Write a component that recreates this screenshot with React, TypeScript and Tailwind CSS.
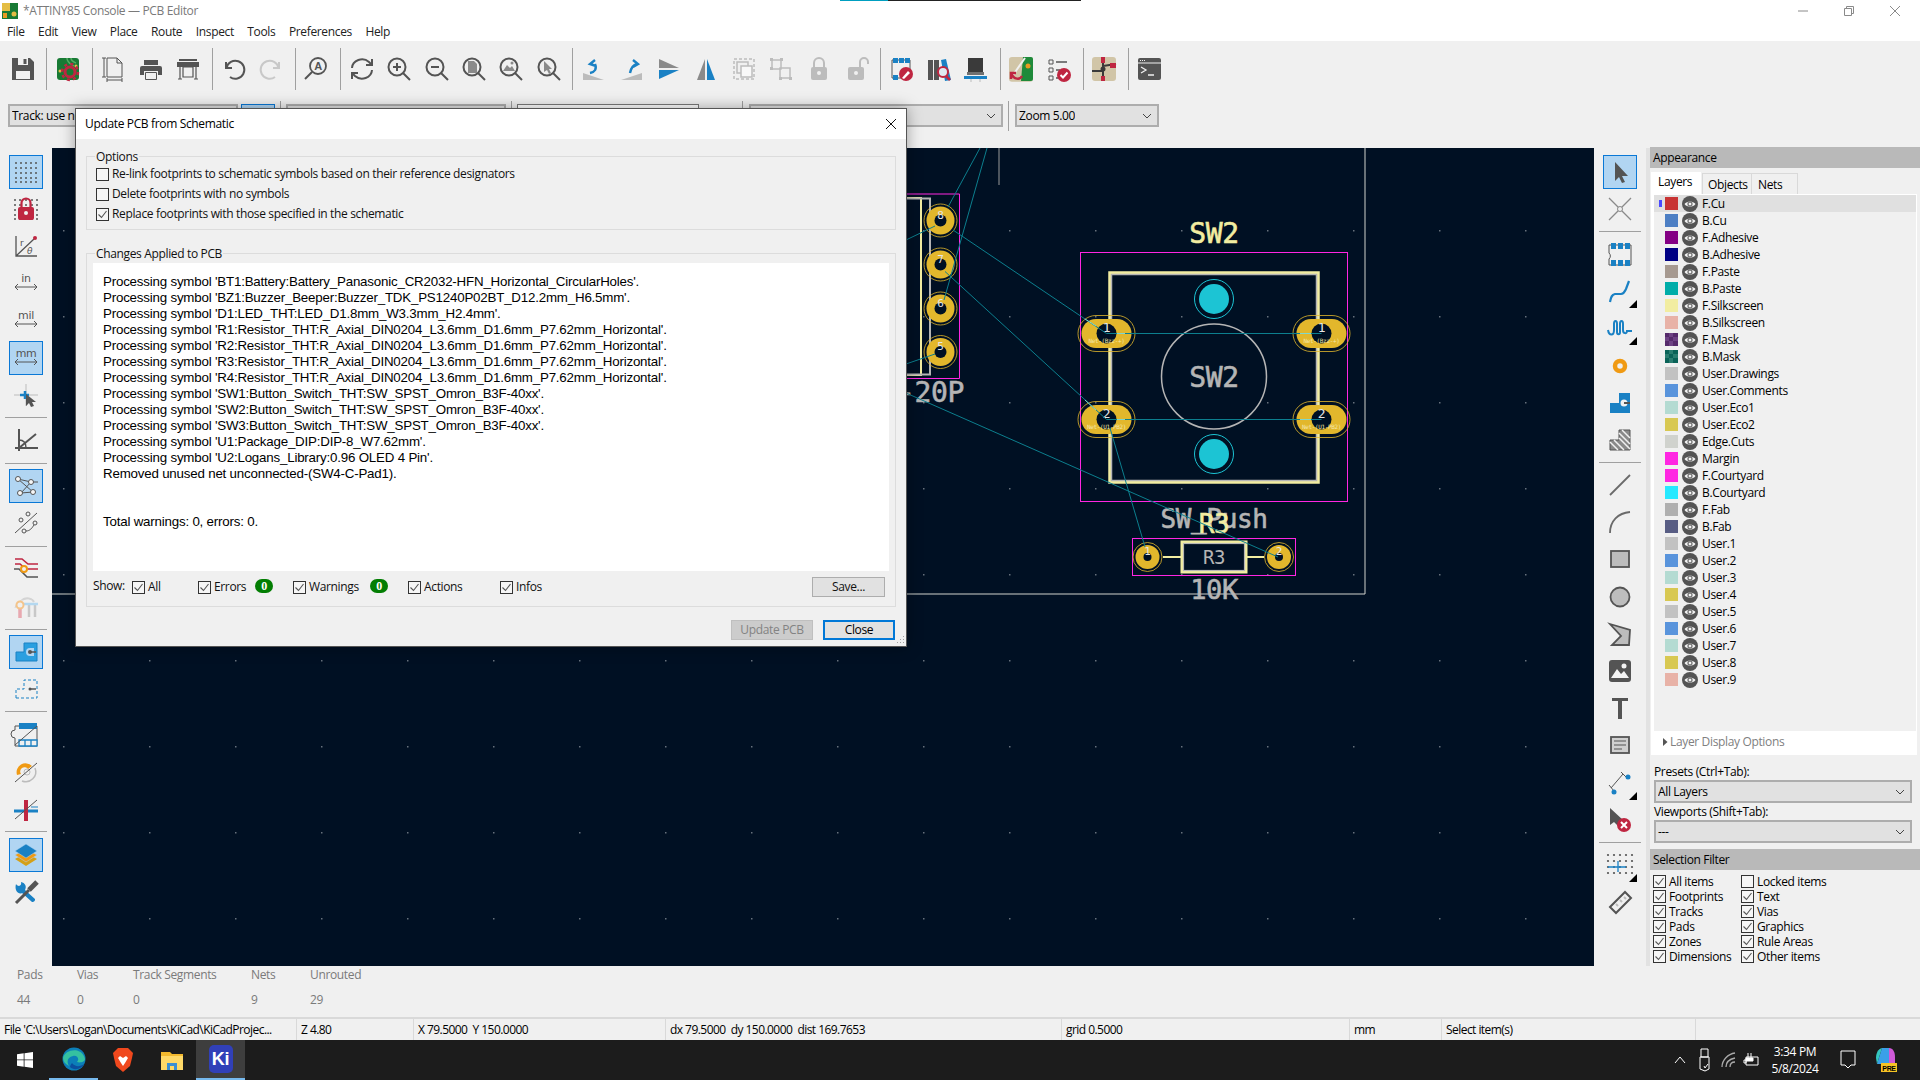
import type { ReactNode } from "react";

const G = "#545454";
const B = "#1a81c4";
const R = "#bf2641";
const D = "#bcbcbc";

function Ic({ children }: { children: ReactNode }) {
  return (
    <svg width="24" height="24" viewBox="0 0 24 24" fill="none" className="overflow-visible">
      {children}
    </svg>
  );
}

const corner = <path d="M21 29h8v-8z" fill="#000" />;
const strike = <path d="M1 22 23 3" stroke={G} strokeWidth="1" />;
const Lock = ({ open }: { open?: boolean }) => (
  <Ic>
    <rect x="4" y="10" width="16" height="13" rx="2" fill={D} />
    <path d={open ? "M16 10V5a4 4 0 0 1 8 0v2" : "M7 10V6a5 5 0 0 1 10 0v4"} stroke={D} strokeWidth="2" />
    <circle cx="12" cy="16" r="2" fill="#f0f0f0" />
  </Ic>
);

const icons: Record<string, ReactNode> = {
  save: (
    <Ic>
      <path d="M1 1h18l4 4v18H1z" fill={G} />
      <rect x="7" y="1" width="10" height="7" fill="#f0f0f0" />
      <rect x="12.500" y="2" width="3" height="5" fill={G} />
      <rect x="5" y="14" width="14" height="8" fill="#f0f0f0" />
    </Ic>
  ),
  boardGear: (
    <Ic>
      <rect x="1" y="1" width="22" height="22" rx="3" fill="#187a34" />
      <path d="M11 1c0 5 4 6 7 8M15 1c0 3 3 4 5 5" stroke="#52ad62" strokeWidth="1.500" />
      <circle cx="4" cy="14" r="1.500" fill="#e4bd44" />
      <circle cx="20" cy="9" r="1.500" fill="#e4bd44" />
      <circle cx="14" cy="15" r="5" stroke={R} strokeWidth="3" />
      <circle cx="14" cy="15" r="8" stroke={R} strokeWidth="2.500" strokeDasharray="3 3.300" />
    </Ic>
  ),
  page: (
    <Ic>
      <path d="M6 1h10l5 5v14H6zM16 1v5h5M3 1v19M1 1h4M1 20h4M6 23h15M6 21v4M21 21v4" stroke={G} strokeWidth="1" />
    </Ic>
  ),
  print: (
    <Ic>
      <path d="M5 3h14v5H5z" fill={G} />
      <path d="M3 9h18a2 2 0 0 1 2 2v7h-4v-4H5v4H1v-7a2 2 0 0 1 2-2z" fill={G} />
      <path d="M6.500 15.500h11v7h-11z" fill="#f0f0f0" stroke={G} />
    </Ic>
  ),
  plot: (
    <Ic>
      <path d="M3 2h18v2H3zM1 5h22v5H1z" fill={G} />
      <path d="M7 10h10v10H7zM4 10v12M20 10v12M2 22h4M18 22h4" stroke={G} strokeWidth="1.200" />
    </Ic>
  ),
  undo: (
    <Ic>
      <path d="M4 5v6h6M4.500 11A9 9 0 1 1 8 20" stroke={G} strokeWidth="2" />
    </Ic>
  ),
  redo: (
    <Ic>
      <path d="M20 5v6h-6M19.500 11A9 9 0 1 0 16 20" stroke="#c8c8c8" strokeWidth="2" />
    </Ic>
  ),
  find: (
    <Ic>
      <circle cx="14" cy="9" r="8" stroke={G} strokeWidth="1.800" />
      <path d="M8 15 1 22" stroke={G} strokeWidth="2" />
      <text x="14" y="13" textAnchor="middle" fontSize="11" fontWeight="700" fill={G} fontFamily="Liberation Sans, sans-serif">A</text>
    </Ic>
  ),
  refresh: (
    <Ic>
      <path d="M2 11a10 9 0 0 1 17-6l3 3M22 2v6h-6M22 13a10 9 0 0 1-17 6l-3-3M2 22v-6h6" stroke={G} strokeWidth="2" />
    </Ic>
  ),
  zoomIn: (
    <Ic>
      <circle cx="10" cy="10" r="8.500" stroke={G} strokeWidth="2" />
      <path d="m16 16 7 7M10 6v8M6 10h8" stroke={G} strokeWidth="2" />
    </Ic>
  ),
  zoomOut: (
    <Ic>
      <circle cx="10" cy="10" r="8.500" stroke={G} strokeWidth="2" />
      <path d="m16 16 7 7M6 10h8" stroke={G} strokeWidth="2" />
    </Ic>
  ),
  zoomFit: (
    <Ic>
      <circle cx="10" cy="10" r="8.500" stroke={G} strokeWidth="2" />
      <path d="m16 16 7 7" stroke={G} strokeWidth="2" />
      <path d="M6 4h6l3 3v9H6z" fill="#8a8a8a" />
    </Ic>
  ),
  zoomObj: (
    <Ic>
      <circle cx="10" cy="10" r="8.500" stroke={G} strokeWidth="2" />
      <path d="m16 16 7 7" stroke={G} strokeWidth="2" />
      <path d="M4 14 8 8l3 3 2-2 3 5z" fill="#8a8a8a" />
      <circle cx="13" cy="6" r="1.500" fill="#8a8a8a" />
    </Ic>
  ),
  zoomSel: (
    <Ic>
      <circle cx="10" cy="10" r="8.500" stroke={G} strokeWidth="2" />
      <path d="m16 16 7 7" stroke={G} strokeWidth="2" />
      <path d="M7 4v11l3-2 2 4 2-1-2-4h3z" fill="#8a8a8a" />
    </Ic>
  ),
  rotCcw: (
    <Ic>
      <path d="M1 23V16l21 7z" fill={D} />
      <path d="M8 16c5-1 7-4 5-9M13 3 8 7l6 2" stroke={B} strokeWidth="2.400" />
    </Ic>
  ),
  rotCw: (
    <Ic>
      <path d="M1 23h21v-7z" fill={D} />
      <path d="M10 16c1-5 3-8 7-9M13 3l5 4-5 3" stroke={B} strokeWidth="2.400" />
    </Ic>
  ),
  flip: (
    <Ic>
      <path d="M2 2 22 11H2z" fill="#8a8a8a" />
      <path d="M2 13h20L2 22z" fill={B} />
    </Ic>
  ),
  mirror: (
    <Ic>
      <path d="M11 2 3 23h8z" fill="#8a8a8a" />
      <path d="M13 2v21h8z" fill={B} />
    </Ic>
  ),
  group: (
    <Ic>
      <path d="M2 2h20v20H2z" stroke={D} strokeWidth="1.500" strokeDasharray="3 2" />
      <path d="M5 5h11v11H5z" stroke={D} strokeWidth="1.500" />
      <path d="M9 9h11v11H9z" fill="#f8f8f8" stroke={D} strokeWidth="1.500" />
    </Ic>
  ),
  ungroup: (
    <Ic>
      <path d="M3 3h9v9H3zM11 11h10v10H11z" stroke={D} strokeWidth="1.500" />
      <path d="M1 1h3v3H1zM11 1h3v3h-3zM1 10h3v3H1zM20 20h3v3h-3zM10 20h3v3h-3z" fill={D} />
    </Ic>
  ),
  lock: <Lock />,
  unlock: <Lock open />,
  fpEdit: (
    <Ic>
      <path d="M3 3h18v18H3z" stroke={G} strokeWidth="1" />
      <path d="M4 1h5v5H4zM10 1h5v5h-5zM16 1h5v5h-5zM4 18h5v5H4z" fill={B} />
      <circle cx="17" cy="17" r="7" fill={R} />
      <path d="m13 21 6-7 2 2-6 6z" fill="#fff" />
    </Ic>
  ),
  libBrowse: (
    <Ic>
      <rect x="1" y="3" width="5" height="20" fill={G} />
      <rect x="7" y="3" width="5" height="20" fill={G} />
      <path d="m14 3 5-1 5 21-6 1z" fill={B} />
      <circle cx="16" cy="15" r="5" fill="#dfe9f2" stroke={R} strokeWidth="2" />
      <path d="m19 19 4 4" stroke={R} strokeWidth="2.500" />
    </Ic>
  ),
  chip: (
    <Ic>
      <path d="M4 1h15v14H4z" fill="#3a3a3a" />
      <path d="M3 15h17v3H3z" fill="#707070" />
      <rect x="0" y="19" width="23" height="3" fill={B} />
      <path d="M7 22v3M16 22v3" stroke={D} />
    </Ic>
  ),
  drcUpdate: (
    <Ic>
      <rect x="0" y="0" width="24" height="29" rx="3" fill="#d1c5a7" transform="scale(1 .85)" />
      <path d="M14 0h8a2 2 0 0 1 2 2v20a2 2 0 0 1-2 2h-10z" fill="#1f8a3a" />
      <path d="m4 18 12-17" stroke="#f0f0f0" strokeWidth="2" />
      <circle cx="19" cy="9" r="2.500" fill="#e89a20" />
      <path d="M2 16c3 7 9 7 11 3M2 22v-6h5" stroke={R} strokeWidth="2.500" />
    </Ic>
  ),
  checklist: (
    <Ic>
      <path d="M2 3h4v4H2zM2 11h4v4H2zM2 19h4v4H2z" stroke={G} />
      <path d="M9 5h11M9 13h4M9 21h2" stroke={G} strokeWidth="1.500" />
      <circle cx="17" cy="18" r="7" fill={R} />
      <path d="m13.500 18 2.500 2.500 4.500-5" stroke="#fff" strokeWidth="2" />
    </Ic>
  ),
  schematic: (
    <Ic>
      <rect x="0" y="0" width="24" height="24" rx="3" fill="#d1c5a7" />
      <path d="M11 0v24M0 14h11M11 9l13-2" stroke="#3a3a3a" strokeWidth="2" />
      <rect x="9" y="0" width="4" height="6" fill={R} />
      <rect x="18" y="6" width="6" height="5" fill={R} />
      <rect x="9" y="19" width="4" height="5" fill={R} />
      <circle cx="11" cy="12" r="2.500" fill="#3a3a3a" />
    </Ic>
  ),
  console: (
    <Ic>
      <rect x="0" y="1" width="23" height="22" rx="2" fill={G} />
      <path d="M0 6h23" stroke="#f0f0f0" />
      <path d="m3 10 5 3-5 3M10 18h6" stroke="#f0f0f0" strokeWidth="1.300" />
      <path d="M2 3.500h6" stroke="#f0f0f0" strokeDasharray="1 1" />
    </Ic>
  ),

  grid: (
    <Ic>
      {[3, 8, 13, 18, 22].flatMap((y) =>
        [2, 7, 12, 17, 22].map((x) => <circle key={x + "-" + y} cx={x} cy={y} r="1" fill={G} />),
      )}
    </Ic>
  ),
  gridLock: (
    <Ic>
      {[3, 8, 13, 18, 22].flatMap((y) =>
        [1, 6, 12, 18, 23].map((x) => <circle key={x + "-" + y} cx={x} cy={y} r="1" fill={G} />),
      )}
      <rect x="4" y="10" width="16" height="13" rx="2" fill={R} />
      <path d="M7.500 10V6a4.500 4.500 0 0 1 9 0v4" stroke={R} strokeWidth="2.200" />
      <circle cx="12" cy="16" r="2" fill="#f0f0f0" />
    </Ic>
  ),
  polar: (
    <Ic>
      <path d="M2 2v20h21M2 22 20 5" stroke={G} strokeWidth="1.300" />
      <circle cx="21" cy="4" r="2" fill={R} />
      <text x="6" y="12" fontSize="9" fill={G} fontFamily="DejaVu Sans, sans-serif">r</text>
      <text x="13" y="20" fontSize="9" fill={G} fontStyle="italic" fontFamily="DejaVu Sans, sans-serif">θ</text>
    </Ic>
  ),
  in: <Unit t="in" />,
  mil: <Unit t="mil" />,
  mm: <Unit t="mm" />,
  cursor: (
    <Ic>
      <path d="M0 12h24M12 1v22" stroke={D} />
      <path d="M6 12h9M11 8v8" stroke={B} strokeWidth="2.500" />
      <path d="M12 11v12l3-3 2 4 3-1-2-4h4z" fill={G} />
    </Ic>
  ),
  angle: (
    <Ic>
      <path d="M5 1v22M1 20h23M5 20 22 6" stroke={G} strokeWidth="2" />
      <path d="M5 12c5 0 7 3 7 8" stroke={G} strokeWidth="1.500" />
    </Ic>
  ),
  rat: (
    <Ic>
      <path d="M4 5 17 8 7 19 19 18M4 5l15 13M17 8h7" stroke={G} />
      <circle cx="4" cy="5" r="2.500" fill="#f8f8f8" stroke={G} />
      <circle cx="17" cy="8" r="2.500" fill="#f8f8f8" stroke={G} />
      <circle cx="6" cy="19" r="2.500" fill="#f8f8f8" stroke={G} />
      <circle cx="19" cy="18" r="2.500" fill="#f8f8f8" stroke={G} />
    </Ic>
  ),
  ratCurve: (
    <Ic>
      <path d="M1 22 23 2" stroke={G} />
      <circle cx="7" cy="9" r="2" stroke={G} />
      <circle cx="14" cy="3" r="2" stroke={G} />
      <circle cx="10" cy="20" r="2" stroke={G} />
      <circle cx="21" cy="12" r="2" stroke={G} />
      <path d="M12 20c4 0 6-3 8-6" stroke={G} />
    </Ic>
  ),
  netHl: (
    <Ic>
      <path d="M1 2h7l6 5h10M1 7h5l6 5h12" stroke={R} strokeWidth="1.600" />
      <path d="M0 12h5l8 8h11" stroke={G} strokeWidth="1.600" />
      <circle cx="10" cy="12" r="3" fill="#f0f0f0" stroke="#f09a13" strokeWidth="2" />
    </Ic>
  ),
  clearance: (
    <Ic>
      <path d="M8 6V6c4-3 10-2 12 2" stroke="#d4d4d4" strokeWidth="2" />
      <path d="M1 14c2-9 14-12 19-7" stroke="#d4d4d4" strokeWidth="1" />
      <path d="M6 14v10" stroke="#e8a9b0" strokeWidth="3.500" />
      <path d="M15 9v14M21 9v14" stroke="#c8c8c8" strokeWidth="2.500" />
      <path d="M9 10h15" stroke="#b4d8f0" strokeWidth="2.500" />
      <circle cx="6" cy="11" r="3.500" fill="#f0f0f0" stroke="#f4c48a" strokeWidth="2" />
    </Ic>
  ),
  padFill: (
    <Ic>
      <path d="M2 21V12h8V3h13v18z" fill="#2b9fe0" stroke={B} />
      <path d="M20 8h-4a4 4 0 0 0 0 8h4" stroke={G} strokeWidth="0" fill="#b1d5f2" />
      <circle cx="16" cy="12" r="2" fill={G} />
      <path d="M16 12h6" stroke={G} strokeWidth="1.500" />
    </Ic>
  ),
  padLine: (
    <Ic>
      <path d="M2 21V12h8V3h13v18z" stroke={B} strokeDasharray="3 2" />
      <circle cx="16" cy="12" r="1.500" fill={G} />
      <path d="M16 12h6" stroke={G} strokeWidth="1.500" />
    </Ic>
  ),
  fpStrike: (
    <Ic>
      <path d="M1 7a2 2 0 0 0 0 8v8h22V3H1z" stroke={G} />
      <path d="M5 0h6v6H5zM11 0h6v6h-6zM17 0h6v6h-6z" fill={B} />
      <path d="M5 17h6v6H5zM11 17h6v6h-6zM17 17h6v6h-6z" fill="#f0f0f0" stroke={B} strokeWidth="1.300" />
      {strike}
    </Ic>
  ),
  viaStrike: (
    <Ic>
      <path d="M3 15a9 9 0 0 1 15-9l-4 3a4 4 0 0 0-7 5z" fill="#f09a13" />
      <path d="M8 21a10 10 0 0 0 13-13" stroke={D} strokeWidth="1.500" />
      <circle cx="13" cy="12" r="3" stroke={D} />
      {strike}
    </Ic>
  ),
  trackStrike: (
    <Ic>
      <path d="M0 14h24" stroke={B} strokeWidth="3" />
      <path d="M12 3v21" stroke={R} strokeWidth="4" />
      <path d="M17 10h7" stroke={B} />
      {strike}
    </Ic>
  ),
  layers: (
    <Ic>
      <path d="m12 10 11 6-11 7-11-7z" fill="#d4a017" />
      <path d="m12 6 11 6-11 7-11-7z" fill="#f09a13" stroke="#b1d5f2" strokeWidth=".5" />
      <path d="m12 1 11 7-11 7-11-7z" fill={B} stroke="#b1d5f2" strokeWidth=".5" />
    </Ic>
  ),
  tools: (
    <Ic>
      <path d="M2 4c3 4 6 1 5-2 4 1 6 4 4 8l10 9a2.500 2.500 0 0 1-3 3L8 13c-3 2-8-2-6-9z" fill={B} />
      <path d="m2 23 13-13" stroke={G} strokeWidth="3" />
      <path d="m15 10 8-8" stroke={G} strokeWidth="5" />
    </Ic>
  ),

  select: (
    <Ic>
      <path d="M7 2v19l4-4 3 6 3-1-3-6h6z" fill={G} />
    </Ic>
  ),
  noconn: (
    <Ic>
      <path d="M1 1 23 23M23 1 1 23" stroke="#8a8a8a" strokeWidth="1.300" />
      <circle cx="12" cy="12" r="2.500" fill="#f0f0f0" stroke="#8a8a8a" />
    </Ic>
  ),
  footprint: (
    <Ic>
      <path d="M1 3h22v20H1v-6a4 4 0 0 0 0-6z" stroke={G} />
      <path d="M3 1h5v6H3zM10 1h5v6h-5zM17 1h5v6h-5zM3 18h5v6H3zM10 18h5v6h-5zM17 18h5v6h-5z" fill={B} />
    </Ic>
  ),
  track: (
    <Ic>
      <path d="M2 23c1-4 1-7 5-8h6c3 0 4-3 5-5l3-8" stroke={B} strokeWidth="2.200" />
      {corner}
    </Ic>
  ),
  tune: (
    <Ic>
      <path d="M0 14c1 6 6 6 6 0V8c0-4 3-4 3 0v8c0 3 3 3 3 0V8c0-4 3-4 3 0v6c0 4 4 4 4 1h5" stroke={B} strokeWidth="2" />
      {corner}
    </Ic>
  ),
  via: (
    <Ic>
      <circle cx="12" cy="12" r="5" stroke="#f09a13" strokeWidth="4.500" />
    </Ic>
  ),
  pad: (
    <Ic>
      <path d="M2 22V12h9V2h11v20z" fill={B} />
      <circle cx="16" cy="12" r="3.500" fill="#f0f0f0" />
      <path d="M16 12h6" stroke={G} strokeWidth="2" />
    </Ic>
  ),
  zone: (
    <Ic>
      <path d="M2 22V12h9V2h11v20z" fill="#8a8a8a" stroke={G} />
      <path d="M11 5l11 11M11 10l11 11M6 12l10 10M2 14l8 8M14 2l8 8" stroke="#f0f0f0" strokeWidth="1.500" />
    </Ic>
  ),
  line: (
    <Ic>
      <path d="M2 22 22 2" stroke="#6a6a6a" strokeWidth="1.800" />
    </Ic>
  ),
  arc: (
    <Ic>
      <path d="M2 23C2 11 10 3 22 2" stroke="#6a6a6a" strokeWidth="1.800" />
    </Ic>
  ),
  rect: (
    <Ic>
      <rect x="3" y="4" width="18" height="16" fill="#bdbdbd" stroke={G} strokeWidth="1.800" />
    </Ic>
  ),
  circle: (
    <Ic>
      <circle cx="12" cy="12" r="9.500" fill="#bdbdbd" stroke={G} strokeWidth="1.800" />
    </Ic>
  ),
  poly: (
    <Ic>
      <path d="M2 2 22 8l-1 15-17 0 9-9z" fill="#bdbdbd" stroke={G} strokeWidth="1.800" />
    </Ic>
  ),
  image: (
    <Ic>
      <rect x="1" y="1" width="22" height="22" rx="3" fill={G} />
      <path d="M3 19 9 10l4 5 3-3 5 7z" fill="#f4f4f4" />
      <circle cx="16" cy="7" r="2.500" fill="#f4f4f4" />
    </Ic>
  ),
  text: (
    <Ic>
      <path d="M4 2h16v3H4zM10 5h4v18h-4z" fill={G} />
    </Ic>
  ),
  textbox: (
    <Ic>
      <rect x="3" y="4" width="18" height="16" fill="#d0d0d0" stroke={G} strokeWidth="1.800" />
      <path d="M6 8h12M6 12h12M6 16h8" stroke={G} />
    </Ic>
  ),
  dim: (
    <Ic>
      <path d="M3 17 15 3M1 14l5 6M13 1l5 5" stroke={G} />
      <circle cx="20" cy="6" r="2.500" fill={B} />
      <circle cx="6" cy="21" r="2.500" fill={B} />
      {corner}
    </Ic>
  ),
  del: (
    <Ic>
      <path d="M2 0v17l4-3 4 4 5-6z" fill={G} />
      <circle cx="16" cy="17" r="7" fill={R} />
      <path d="m13 14 6 6M19 14l-6 6" stroke="#fff" strokeWidth="2" />
    </Ic>
  ),
  gridOrigin: (
    <Ic>
      {[2, 8, 14, 20].flatMap((y) =>
        [2, 8, 14, 20, 26].map((x) => <circle key={x + "-" + y} cx={x - 2} cy={y} r="1.100" fill={G} />),
      )}
      <path d="M0 14h18M10 8v11" stroke={B} strokeWidth="1.300" />
      {corner}
    </Ic>
  ),
  ruler: (
    <Ic>
      <path d="m2 17 15-15 6 6-15 15z" stroke={G} strokeWidth="2" />
      <path d="m8 14 2 2M12 10l2 2M16 7l2 2" stroke="#bdbdbd" strokeWidth="2" />
    </Ic>
  ),
};

function Unit({ t }: { t: string }) {
  return (
    <Ic>
      <text x="12" y="11" textAnchor="middle" fontSize="11" fill={G} fontFamily="DejaVu Sans, sans-serif">{t}</text>
      <path d="M1 16h22M4 13l-3 3 3 3M20 13l3 3-3 3" stroke={G} strokeWidth="1" />
    </Ic>
  );
}

const topTools = ["save", "|", "boardGear", "|", "page", "print", "plot", "|", "undo", "redo", "|", "find", "|", "refresh", "zoomIn", "zoomOut", "zoomFit", "zoomObj", "zoomSel", "|", "rotCcw", "rotCw", "flip", "mirror", "group", "ungroup", "lock", "unlock", "|", "fpEdit", "libBrowse", "chip", "|", "drcUpdate", "checklist", "|", "schematic", "|", "console"];
const leftTools = ["*grid", "gridLock", "polar", "in", "mil", "*mm", "cursor", "|", "angle", "|", "*rat", "ratCurve", "|", "netHl", "clearance", "|", "*padFill", "padLine", "|", "fpStrike", "viaStrike", "trackStrike", "|", "*layers", "tools"];
const rightTools = ["*select", "noconn", "|", "footprint", "track", "tune", "via", "pad", "zone", "|", "line", "arc", "rect", "circle", "poly", "image", "text", "textbox", "dim", "del", "|", "gridOrigin", "ruler"];

function SideBar({ items, className, sep }: { items: string[]; className: string; sep: string }) {
  return (
    <div className={"flex flex-col items-center pt-[5px] bg-[#f0f0f0] " + className}>
      {items.map((n, i) =>
        n === "|" ? (
          <div key={i} className={"w-full flex items-center px-[5px] shrink-0 " + sep}>
            <div className="h-px w-full bg-[#a0a0a0]" />
          </div>
        ) : (
          <div key={i} className="h-[37.2px] w-[37px] shrink-0 flex items-center justify-center">
            <div className={"w-[34px] h-[34px] flex items-center justify-center border " + (n[0] === "*" ? "bg-[#b1d5f2] border-[#0a78d6]" : "border-transparent")}>
              {icons[n.replace("*", "")]}
            </div>
          </div>
        ),
      )}
    </div>
  );
}

function Check({ on = true }: { on?: boolean }) {
  return (
    <span className="w-[13px] h-[13px] shrink-0 border border-[#333] bg-[#f6f6f6] flex items-center justify-center">
      {on && (
        <svg width="11" height="11" viewBox="0 0 11 11" fill="none">
          <path d="m1.500 5.500 3 3 5-6.500" stroke="#555" strokeWidth="1.100" />
        </svg>
      )}
    </span>
  );
}

function Chevron() {
  return (
    <svg width="10" height="6" viewBox="0 0 10 6" fill="none" className="ml-auto shrink-0">
      <path d="m1 1 4 4 4-4" stroke="#444" strokeWidth="1" />
    </svg>
  );
}

function Combo({ text, className }: { text?: string; className: string }) {
  return (
    <div className={"h-[23px] border-2 border-[#adadad] bg-[#e1e1e1] flex items-center pl-[2px] pr-[5px] shrink-0 " + className}>
      <span className="truncate text-black">{text}</span>
      <Chevron />
    </div>
  );
}

function Pad({ x, y, num, net }: { x: number; y: number; num: string; net: string }) {
  return (
    <g>
      <rect x={x - 28.500} y={y - 18} width="57" height="36" rx="18" fill="none" stroke="#e2b72c" strokeWidth=".8" />
      <rect x={x - 25} y={y - 14.500} width="50" height="29" rx="14.500" fill="#e2b72c" />
      <circle cx={x} cy={y} r="10" fill="#001023" />
      <text x={x} y={y - 2} textAnchor="middle" fontSize="13" fill="#e6e6e6" fontFamily="DejaVu Sans Mono, monospace">{num}</text>
      <text x={x} y={y + 9} textAnchor="middle" fontSize="6" fill="#f3e6a6" fontFamily="DejaVu Sans Mono, monospace">{net}</text>
    </g>
  );
}

function RoundPad({ x, y, num, r = 16.500 }: { x: number; y: number; num: string; r?: number }) {
  return (
    <g>
      <circle cx={x} cy={y} r={r} fill="none" stroke="#e2b72c" strokeWidth=".8" />
      <circle cx={x} cy={y} r={r - 2.500} fill="#e2b72c" />
      <circle cx={x} cy={y} r={r - 10.500} fill="#001023" />
      <text x={x} y={y - 2} textAnchor="middle" fontSize="11" fill="#e6e6e6" fontFamily="DejaVu Sans Mono, monospace">{num}</text>
    </g>
  );
}

function Label({ x, y, size, fill, t, anchor = "middle" }: { x: number; y: number; size: number; fill: string; t: string; anchor?: "middle" | "end" }) {
  return (
    <text x={x} y={y} textAnchor={anchor} fontSize={size} fill={fill} stroke={fill} strokeWidth=".6" fontFamily="DejaVu Sans Mono, monospace">
      {t}
    </text>
  );
}

function Board() {
  const dots = [];
  for (let x = 63; x < 1594; x += 86) {
    for (let y = 230 - 86; y < 966; y += 86) {
      if (y > 148) dots.push(<rect key={x + "-" + y} x={x} y={y} width="1.500" height="1.500" fill="#66707c" />);
    }
  }
  const teal = "#0c7f8e";
  return (
    <svg viewBox="52 148 1542 818" width="1542" height="818" className="block">
      <rect x="52" y="148" width="1542" height="818" fill="#001023" />
      {dots}
      <path d="M1365 148V594H52" fill="none" stroke="#d0d2cd" strokeWidth="1" />
      <path d="M999 148v37" stroke="#9a9a9a" strokeWidth="1" />

      <rect x="1080.500" y="252.500" width="267" height="249" fill="none" stroke="#ff26e2" />
      <rect x="1110" y="273" width="208" height="209" fill="none" stroke="#f2eda1" strokeWidth="3.500" />
      <rect x="1111.500" y="274.500" width="205" height="206" fill="none" stroke="#b5b5b5" strokeWidth="1.500" />
      <circle cx="1214" cy="376.500" r="52.500" fill="#001023" stroke="#b5b5b5" strokeWidth="1.500" />
      <Label x={1214} y={387} size={28} fill="#b5b5b5" t="SW2" />
      <Label x={1214} y={243} size={28} fill="#f2eda1" t="SW2" />

      {[299, 454].map((y) => (
        <g key={y}>
          <circle cx="1214" cy={y} r="19.500" fill="#001023" stroke="#1cc4d4" />
          <circle cx="1214" cy={y} r="15" fill="#1cc4d4" />
        </g>
      ))}
      <Pad x={1106.500} y={333.500} num="1" net="Net-(Bzz-+)" />
      <Pad x={1321.500} y={333.500} num="1" net="Net-(Bzz-+)" />
      <Pad x={1106.500} y={419.500} num="2" net="Net-(U1-PB2)" />
      <Pad x={1321.500} y={419.500} num="2" net="Net-(U1-PB2)" />

      <path d="M906 194H959.500V378.500H906" fill="none" stroke="#ff26e2" />
      <path d="M906 198h15v177h-15" fill="none" stroke="#f2eda1" strokeWidth="2" />
      <path d="M906 198.500h24v176h-24" fill="none" stroke="#b5b5b5" strokeWidth="2" />
      <RoundPad x={940.500} y={220.500} num="8" />
      <RoundPad x={940.500} y={264.500} num="7" />
      <RoundPad x={940.500} y={308.500} num="6" />
      <RoundPad x={940.500} y={352} num="5" />
      <Label x={964} y={402} size={28} fill="#b5b5b5" t="-20P" anchor="end" />

      <Label x={1214} y={528} size={26} fill="#b5b5b5" t="SW_Push" />
      <Label x={1214} y={533} size={26} fill="#f2eda1" t="R3" />
      <rect x="1132.500" y="538.500" width="163" height="37" fill="none" stroke="#ff26e2" />
      <path d="M1163 557h19M1246 557h18" stroke="#f2eda1" strokeWidth="2" />
      <rect x="1182" y="542" width="64" height="30" fill="none" stroke="#f2eda1" strokeWidth="3" />
      <rect x="1183.500" y="543.500" width="61" height="27" fill="none" stroke="#b5b5b5" strokeWidth="1.200" />
      <text x="1214" y="564" textAnchor="middle" fontSize="19" fill="#b5b5b5" fontFamily="DejaVu Sans Mono, monospace">R3</text>
      <RoundPad x={1147.500} y={557} num="1" r={14.500} />
      <RoundPad x={1279} y={557} num="2" r={14.500} />
      <Label x={1214} y={599} size={27} fill="#b5b5b5" t="10K" />

      <g stroke={teal} strokeWidth="1" fill="none">
        <path d="M1106.500 333.500H1321.500M1106.500 419.500H1321.500" />
        <path d="M953 230 1106.500 333.500M945 271.500 1106.500 419.500" />
        <path d="M980 148 948 207M987 148 944 300M1110 428 1145 547M906 393 1278 557" />
        <path d="M906 240 935 226M906 364 935 354" />
      </g>
      <g stroke="#7fd8cc" strokeWidth="1" fill="none">
        <path d="M1085 319 1096 326M1085 400 1096 410M1117 333.500H1125M1117 419.500H1125M1300 333.500H1311M1300 419.500H1311" />
      </g>
    </svg>
  );
}

const layers: [string, string][] = [
  ["F.Cu", "#c83434"], ["B.Cu", "#4d7fc4"], ["F.Adhesive", "#840084"], ["B.Adhesive", "#000084"],
  ["F.Paste", "#a69990"], ["B.Paste", "#00ada9"], ["F.Silkscreen", "#f2eda1"], ["B.Silkscreen", "#e8b2a7"],
  ["F.Mask", "mask-f"], ["B.Mask", "mask-b"], ["User.Drawings", "#c2c2c2"], ["User.Comments", "#5994dc"],
  ["User.Eco1", "#b4dbd2"], ["User.Eco2", "#d8c852"], ["Edge.Cuts", "#d0d2cd"], ["Margin", "#ff26e2"],
  ["F.Courtyard", "#ff26e2"], ["B.Courtyard", "#26e9ff"], ["F.Fab", "#afafaf"], ["B.Fab", "#585d84"],
  ["User.1", "#c2c2c2"], ["User.2", "#5994dc"], ["User.3", "#b4dbd2"], ["User.4", "#d8c852"],
  ["User.5", "#c2c2c2"], ["User.6", "#5994dc"], ["User.7", "#b4dbd2"], ["User.8", "#d8c852"], ["User.9", "#e8b2a7"],
];

function Swatch({ color }: { color: string }) {
  if (color.startsWith("mask")) {
    const [a, b] = color === "mask-f" ? ["#552a6b", "#6d4284"] : ["#0a6358", "#2a7d70"];
    return (
      <svg width="13" height="13" viewBox="0 0 13 13" className="shrink-0">
        <rect width="13" height="13" fill={a} />
        <path d="M4 0h4v4H4zM0 4h4v4H0zM8 4h5v4H8zM4 8h4v5H4z" fill={b} />
      </svg>
    );
  }
  return <span className="w-[13px] h-[13px] shrink-0" style={{ backgroundColor: color }} />;
}

function Eye() {
  return (
    <svg width="16" height="16" viewBox="0 0 16 16" className="shrink-0" fill="none">
      <circle cx="8" cy="8" r="8" fill="#545454" />
      <path d="M2.500 8C5 4.500 11 4.500 13.500 8 11 11.500 5 11.500 2.500 8z" fill="#f4f4f4" />
      <circle cx="8" cy="8" r="2" fill="none" stroke="#777" strokeWidth="1.300" />
    </svg>
  );
}

const logLines = [
  "Processing symbol 'BT1:Battery:Battery_Panasonic_CR2032-HFN_Horizontal_CircularHoles'.",
  "Processing symbol 'BZ1:Buzzer_Beeper:Buzzer_TDK_PS1240P02BT_D12.2mm_H6.5mm'.",
  "Processing symbol 'D1:LED_THT:LED_D1.8mm_W3.3mm_H2.4mm'.",
  "Processing symbol 'R1:Resistor_THT:R_Axial_DIN0204_L3.6mm_D1.6mm_P7.62mm_Horizontal'.",
  "Processing symbol 'R2:Resistor_THT:R_Axial_DIN0204_L3.6mm_D1.6mm_P7.62mm_Horizontal'.",
  "Processing symbol 'R3:Resistor_THT:R_Axial_DIN0204_L3.6mm_D1.6mm_P7.62mm_Horizontal'.",
  "Processing symbol 'R4:Resistor_THT:R_Axial_DIN0204_L3.6mm_D1.6mm_P7.62mm_Horizontal'.",
  "Processing symbol 'SW1:Button_Switch_THT:SW_SPST_Omron_B3F-40xx'.",
  "Processing symbol 'SW2:Button_Switch_THT:SW_SPST_Omron_B3F-40xx'.",
  "Processing symbol 'SW3:Button_Switch_THT:SW_SPST_Omron_B3F-40xx'.",
  "Processing symbol 'U1:Package_DIP:DIP-8_W7.62mm'.",
  "Processing symbol 'U2:Logans_Library:0.96 OLED 4 Pin'.",
  "Removed unused net unconnected-(SW4-C-Pad1).",
];

function Badge() {
  return (
    <span className="block w-[18px] h-[14px] -mt-[2px] rounded-full bg-[#037e03] text-white text-[12px] leading-[14px] text-center font-['Liberation_Serif',serif] font-bold">0</span>
  );
}

function Dialog() {
  return (
    <div className="absolute left-[75px] top-[108px] w-[832px] h-[539px] flex flex-col border border-[#555] bg-[#f0f0f0] shadow-[0_0_14px_rgba(0,0,0,0.35)]">
      <div className="h-[30px] bg-white flex items-center pl-[9px] pr-[9px] shrink-0">
        <span className="text-black">Update PCB from Schematic</span>
        <svg width="12" height="12" viewBox="0 0 12 12" className="ml-auto" fill="none">
          <path d="m1 1 10 10M11 1 1 11" stroke="#111" strokeWidth="1" />
        </svg>
      </div>
      <div className="flex-1 flex flex-col px-[10px] pt-[17px] relative">
        <div className="h-[74px] border border-[#dcdcdc] relative pl-[9px] pt-[7px] flex flex-col shrink-0">
          <span className="absolute left-[8px] -top-[8px] leading-[16px] bg-[#f0f0f0] px-px text-[#111]">Options</span>
          {[
            ["Re-link footprints to schematic symbols based on their reference designators", false],
            ["Delete footprints with no symbols", false],
            ["Replace footprints with those specified in the schematic", true],
          ].map(([t, on]) => (
            <label key={t as string} className="h-[20px] flex items-center gap-[3px] text-[#111]">
              <Check on={on as boolean} />
              <span>{t}</span>
            </label>
          ))}
        </div>
        <div className="mt-[23px] h-[354px] border border-[#dcdcdc] relative px-[6px] pt-[9px] flex flex-col shrink-0">
          <span className="absolute left-[8px] -top-[8px] leading-[16px] bg-[#f0f0f0] px-px text-[#111]">Changes Applied to PCB</span>
          <div className="h-[308px] bg-white pl-[10px] pt-[11px] text-[13.33px] leading-[16px] tracking-[-0.2px] text-black font-['Liberation_Sans',sans-serif] shrink-0">
            {logLines.map((l) => (
              <div key={l}>{l}</div>
            ))}
            <div className="mt-[32px]">Total warnings: 0, errors: 0.</div>
          </div>
          <div className="flex items-center flex-1 text-[#111] pb-[3px]">
            <span className="w-[39px] -mt-[3px]">Show:</span>
            <span className="w-[66px] flex items-center gap-[3px]"><Check /> All</span>
            <span className="w-[57px] flex items-center gap-[3px]"><Check /> Errors</span>
            <span className="w-[38px]"><Badge /></span>
            <span className="w-[77px] flex items-center gap-[3px]"><Check /> Warnings</span>
            <span className="w-[38px]"><Badge /></span>
            <span className="w-[92px] flex items-center gap-[3px]"><Check /> Actions</span>
            <span className="flex items-center gap-[3px]"><Check /> Infos</span>
            <button className="ml-auto w-[73px] h-[20px] mr-[4px] bg-[#e1e1e1] border border-[#adadad] text-[#111]">Save...</button>
          </div>
        </div>
        <div className="flex justify-end gap-[10px] pr-[1px] mt-[13px]">
          <button className="w-[82px] h-[20px] bg-[#cccccc] border border-[#bfbfbf] text-[#838383]">Update PCB</button>
          <button className="w-[72px] h-[20px] bg-[#e1e1e1] border-2 border-[#0078d7] text-black leading-none">Close</button>
        </div>
        <svg width="10" height="10" viewBox="0 0 10 10" className="absolute right-px bottom-px">
          <path d="M8 1h1v1H8zM5 4h1v1H5zM8 4h1v1H8zM2 7h1v1H2zM5 7h1v1H5zM8 7h1v1H8z" fill="#a0a0a0" />
        </svg>
      </div>
    </div>
  );
}

const filters: [string, string][] = [
  ["All items", "Locked items"],
  ["Footprints", "Text"],
  ["Tracks", "Vias"],
  ["Pads", "Graphics"],
  ["Zones", "Rule Areas"],
  ["Dimensions", "Other items"],
];

function Appearance() {
  return (
    <div className="w-[270px] shrink-0 flex flex-col bg-[#f0f0f0] text-black">
      <div className="h-[21px] -mt-px bg-[#b9b9b9] flex items-center pl-[3px] shrink-0">Appearance</div>
      <div className="h-[26px] flex items-end pl-[1px] shrink-0">
        <div className="w-[50px] h-[22px] bg-white leading-[20px] pl-[7px]">Layers</div>
        <div className="w-[50px] h-[21px] ml-px border border-b-0 border-[#d9d9d9] leading-[22px] pl-[5px]">Objects</div>
        <div className="w-[46px] h-[21px] border border-b-0 border-l-0 border-[#d9d9d9] leading-[22px] pl-[6px]">Nets</div>
      </div>
      <div className="h-[561px] mx-px w-[266px] bg-white flex flex-col px-[3px] pt-px shrink-0">
        <div className="h-[536px] w-[262px] bg-[#f0f0f0] shrink-0">
          {layers.map(([name, color], i) => (
            <div key={name} className={"h-[17px] flex items-center pl-[11px] " + (i === 0 ? "bg-[#e0e0e0] relative" : "")}>
              {i === 0 && <span className="absolute left-[5px] top-[5px] w-[3px] h-[7px] bg-[#4a4aff]" />}
              <Swatch color={color} />
              <span className="ml-[4px]"><Eye /></span>
              <span className="ml-[4px]">{name}</span>
            </div>
          ))}
        </div>
        <div className="flex items-center h-[22px] pl-[9px] gap-[2px] text-[#808080]">
          <svg width="5" height="8" viewBox="0 0 5 8"><path d="M0 0l4.500 4L0 8z" fill="#555" /></svg>
          Layer Display Options
        </div>
      </div>
      <div className="px-[4px] pt-[9px] flex flex-col w-[266px]">
        <div className="leading-[16px]">Presets (Ctrl+Tab):</div>
        <Combo text="All Layers" className="w-full" />
        <div className="leading-[16px] mt-[1px]">Viewports (Shift+Tab):</div>
        <Combo text="---" className="w-full" />
      </div>
      <div className="h-[21px] mt-[6px] bg-[#b9b9b9] flex items-center pl-[3px] shrink-0">Selection Filter</div>
      <div className="pl-[3px] pt-[4px] flex flex-col">
        {filters.map(([a, b], i) => (
          <div key={a} className="h-[15px] flex items-center">
            <span className="w-[88px] flex items-center gap-[3px]"><Check /> {a}</span>
            <span className="flex items-center gap-[3px]"><Check on={i !== 0} /> {b}</span>
          </div>
        ))}
      </div>
    </div>
  );
}

function Taskbar() {
  return (
    <div className="h-[40px] bg-[#1c1c1c] flex items-center text-white shrink-0 text-[12px]">
      <div className="w-[49px] flex justify-center">
        <svg width="16" height="16" viewBox="0 0 16 16"><path d="M0 2.200 6.700 1.300V7.500H0zM7.500 1.200 16 0V7.500H7.500zM0 8.300H6.700V14.700L0 13.800zM7.500 8.300H16V16L7.500 14.800z" fill="#fff" /></svg>
      </div>
      <div className="w-[49px] h-full flex items-center justify-center border-b-2 border-[#76b9ed]">
        <svg width="24" height="24" viewBox="0 0 24 24">
          <circle cx="12" cy="12" r="11.500" fill="#0c7fb8" />
          <path d="M1 11C3 2 20-1 23 12c0 3-5 4-8 3 3-3 0-7-4-6-5 1-7 5-4 10C3 17 1 14 1 11z" fill="#35c1a0" />
          <path d="M8 20c4 4 12 2 14-3-4 3-9 3-12-1-1 1-2 3-2 4z" fill="#0b4f9e" />
        </svg>
      </div>
      <div className="w-[49px] flex justify-center">
        <svg width="20" height="24" viewBox="0 0 20 24">
          <path d="M5 0h10l3 3 2 2-1 5-2 8-7 6-7-6-2-8L0 5l2-2z" fill="#f0481d" />
          <path d="M7 8l3 2 3-2 2 2-3 5-2 3-2-3-3-5z" fill="#fff" />
        </svg>
      </div>
      <div className="w-[49px] flex justify-center">
        <svg width="22" height="24" viewBox="0 0 22 24">
          <path d="M0 4h9l2 2h11v16H0z" fill="#f3b92e" />
          <path d="M0 8h22v14H0z" fill="#ffd968" />
          <path d="M6 15h10v7H6z" fill="#3b8fd4" />
          <path d="M9 18h4v4H9z" fill="#ffd968" />
        </svg>
      </div>
      <div className="w-[49px] h-full bg-[#3e3e3e] flex items-center justify-center border-b-2 border-[#76b9ed]">
        <span className="w-[24px] h-[28px] rounded-[5px] bg-[#3140b8] text-white text-[18px] font-bold leading-[28px] text-center font-['Liberation_Sans',sans-serif]">Ki</span>
      </div>
      <div className="ml-auto flex items-center">
        <svg width="12" height="8" viewBox="0 0 12 8" fill="none" className="mr-[13px]"><path d="m1 7 5-6 5 6" stroke="#fff" /></svg>
        <svg width="12" height="24" viewBox="0 0 12 24" fill="none" className="mr-[10px]"><path d="M2 1h7v8H2zM1 9h9v12l-4 2-5-2z" stroke="#fff" /><path d="m5 18 1 2 3-4" stroke="#fff" /></svg>
        <svg width="16" height="16" viewBox="0 0 16 16" fill="none" className="mr-[6px]"><path d="M1 15C1 8 7 2 14 1M5 15c0-5 4-8 9-9M9 15c0-3 2-5 5-5" stroke="#aaa" strokeWidth="1.300" /></svg>
        <svg width="16" height="16" viewBox="0 0 16 16" fill="none" className="mr-[6px]"><path d="M3 5h12v8H3zM1 8h2v3H1z" stroke="#fff" /><path d="M5 1v5M8 1v5M3 6h7v3H3z" fill="#fff" stroke="#fff" /></svg>
        <div className="w-[60px] flex flex-col items-center leading-[17px] text-[12px]">
          <span>3:34 PM</span>
          <span>5/8/2024</span>
        </div>
        <svg width="16" height="20" viewBox="0 0 16 20" fill="none" className="ml-[15px] mr-[19px]"><path d="M1 1h14v14h-4l-3 3-3-3H1z" stroke="#fff" /></svg>
        <svg width="22" height="26" viewBox="0 0 22 26" className="mr-[23px]">
          <path d="M7 1h7l4 16H2z" fill="#3aa0e8" />
          <path d="M14 1c4 0 6 4 6 9v7h-6z" fill="#d05ad8" />
          <path d="M2 17 7 1c-4 1-6 5-6 10z" fill="#34c6c0" />
          <rect x="6" y="16" width="16" height="9" fill="#f7c325" />
          <text x="14" y="23.500" textAnchor="middle" fontSize="7" fontWeight="700" fill="#000" fontFamily="Liberation Sans, sans-serif">PRE</text>
        </svg>
      </div>
    </div>
  );
}

export default function App() {
  return (
    <div className="relative w-[1920px] h-[1080px] overflow-hidden flex flex-col bg-[#f0f0f0] text-[12px] font-['Open_Sans',sans-serif] tracking-[-0.35px]">
      {/* titlebar + menu */}
      <div className="h-[22px] bg-white flex items-center relative shrink-0">
        <svg width="16" height="16" viewBox="0 0 16 16" className="ml-[2px]">
          <rect width="16" height="16" fill="#187a34" />
          <rect width="8" height="8" fill="#e4bd44" />
          <circle cx="12" cy="11" r="2.500" fill="#e4bd44" />
          <rect x="1" y="10" width="4" height="5" fill="#e89a20" />
        </svg>
        <span className="ml-[5px] text-[#7a7a7a]">*ATTINY85 Console — PCB Editor</span>
        <div className="absolute left-[840px] top-0 h-px flex">
          <span className="w-[48px] bg-[#009fc0]" />
          <span className="w-[193px] bg-[#222]" />
        </div>
        <div className="ml-auto flex items-center gap-[34px] pr-[19px]">
          <svg width="12" height="12" viewBox="0 0 12 12" fill="none"><path d="M1 6h10" stroke="#8a8a8a" /></svg>
          <svg width="12" height="12" viewBox="0 0 12 12" fill="none"><path d="M1.500 3.500h7v7h-7zM3.500 3.500v-2h7v7h-2" stroke="#8a8a8a" /></svg>
          <svg width="12" height="12" viewBox="0 0 12 12" fill="none"><path d="m1 1 10 10M11 1 1 11" stroke="#8a8a8a" /></svg>
        </div>
      </div>
      <div className="h-[19px] bg-white flex items-center pl-[7px] gap-[13.5px] text-[#222] shrink-0">
        {["File", "Edit", "View", "Place", "Route", "Inspect", "Tools", "Preferences", "Help"].map((m) => (
          <span key={m}>{m}</span>
        ))}
      </div>

      {/* main toolbar */}
      <div className="h-[63px] flex items-center pl-[4px] pb-[7px] shrink-0">
        {topTools.map((n, i) =>
          n === "|" ? (
            <div key={i} className="w-[8px] h-[42px] shrink-0 flex justify-center pl-[3px]">
              <div className="w-px h-full bg-[#a0a0a0]" />
            </div>
          ) : (
            <div key={i} className="w-[37.4px] h-[34px] shrink-0 flex items-center justify-center">
              {icons[n]}
            </div>
          ),
        )}
      </div>

      {/* options toolbar */}
      <div className="h-[44px] flex items-start pl-[8px] shrink-0">
        <Combo text="Track: use ne" className="w-[230px]" />
        <div className="w-[34px] h-[23px] ml-[3px] bg-[#b1d5f2] border border-[#0a78d6]" />
        <div className="w-px h-[30px] mx-[5px] -mt-[3px] bg-[#a0a0a0]" />
        <Combo className="w-[220px]" />
        <div className="w-px h-[30px] mx-[5px] -mt-[3px] bg-[#a0a0a0]" />
        <div className="w-[182px] h-[23px] bg-white border border-[#7a7a7a]" />
        <div className="w-px h-[30px] ml-[43px] mr-[6px] -mt-[3px] bg-[#a0a0a0]" />
        <Combo className="w-[254px]" />
        <div className="w-px h-[30px] mx-[5px] -mt-[3px] bg-[#a0a0a0]" />
        <Combo text="Zoom 5.00" className="w-[144px] ml-[1px]" />
      </div>

      {/* editor area */}
      <div className="flex-1 flex min-h-0">
        <SideBar items={leftTools} sep="h-[8.5px]" className="w-[52px] shrink-0" />
        <div className="w-[1542px] shrink-0">
          <Board />
        </div>
        <SideBar items={rightTools} sep="h-[8px]" className="w-[52px] shrink-0" />
        <div className="w-[4px] bg-[#e2e2e2] shrink-0" />
        <Appearance />
      </div>

      {/* message panel */}
      <div className="h-[51px] flex text-[#7a7a7a] shrink-0 pl-[17px]">
        {[["Pads", "44", 60], ["Vias", "0", 56], ["Track Segments", "0", 118], ["Nets", "9", 59], ["Unrouted", "29", 80]].map(([a, b, w]) => (
          <div key={a as string} className="flex flex-col" style={{ width: w as number }}>
            <span className="mt-[1px] leading-[16px]">{a}</span>
            <span className="mt-[9px] leading-[16px]">{b}</span>
          </div>
        ))}
      </div>

      {/* status bar */}
      <div className="h-[23px] border-t-2 border-[#d9d9d9] flex items-center text-black shrink-0 tracking-[-0.55px]">
        {[
          ["File 'C:\\Users\\Logan\\Documents\\KiCad\\KiCadProjec...", 297],
          ["Z 4.80", 117],
          ["X 79.5000  Y 150.0000", 252],
          ["dx 79.5000  dy 150.0000  dist 169.7653", 396],
          ["grid 0.5000", 288],
          ["mm", 92],
          ["Select item(s)", 254],
        ].map(([t, w]) => (
          <div key={t as string} className="h-full border-r border-[#d9d9d9] pl-[4px] flex items-center whitespace-pre overflow-hidden" style={{ width: w as number }}>
            {t}
          </div>
        ))}
      </div>

      <Taskbar />
      <Dialog />
    </div>
  );
}
